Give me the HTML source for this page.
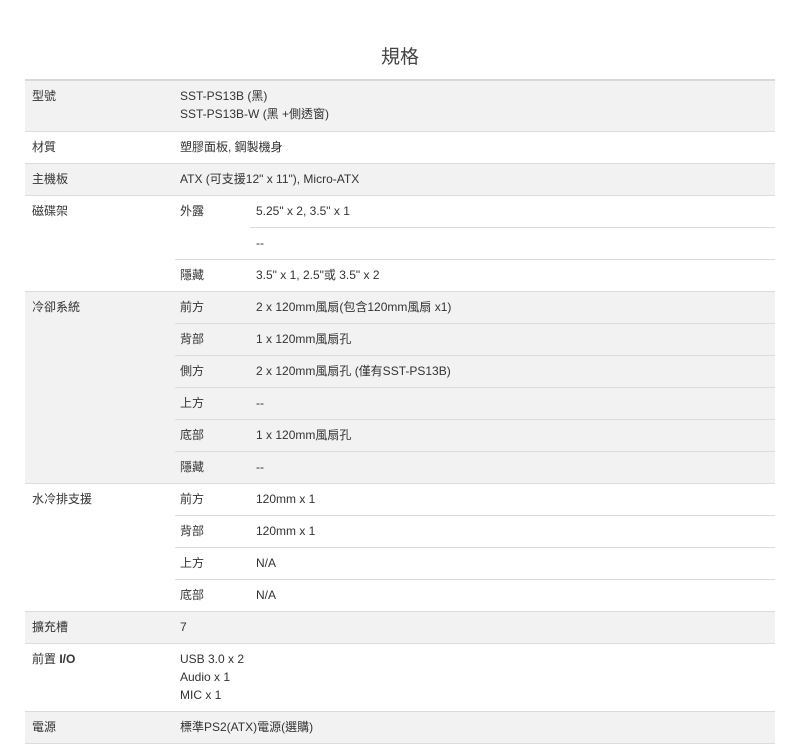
<!DOCTYPE html>
<html><head><meta charset="utf-8"><style>
*{margin:0;padding:0;box-sizing:border-box}
body{width:800px;height:748px;background:#fff;position:relative;overflow:hidden;font-family:"Liberation Sans","Noto Sans CJK TC",sans-serif;font-size:12px;color:#333}
.t{position:absolute;left:0;top:42px;width:800px;text-align:center;font-size:19px;color:#444}
.r{position:absolute;left:25px;width:750px}
.g{background:#f2f2f2}
.l{position:absolute;height:1px;background:#dcdcdc}
.x{position:absolute;line-height:18px;white-space:nowrap}
</style></head><body>
<div class="t">規格</div>
<div class="r g" style="top:80px;height:51px"></div>
<div class="r g" style="top:163px;height:32px"></div>
<div class="r g" style="top:291px;height:192px"></div>
<div class="r g" style="top:611px;height:32px"></div>
<div class="r g" style="top:711px;height:32px"></div>
<div class="l" style="left:25px;width:750px;top:79px;height:2px;background:#d8d8d8"></div>
<div class="l" style="left:25px;width:750px;top:131px"></div>
<div class="l" style="left:25px;width:750px;top:163px"></div>
<div class="l" style="left:25px;width:750px;top:195px"></div>
<div class="l" style="left:250px;width:525px;top:227px"></div>
<div class="l" style="left:175px;width:600px;top:259px"></div>
<div class="l" style="left:25px;width:750px;top:291px"></div>
<div class="l" style="left:175px;width:600px;top:323px"></div>
<div class="l" style="left:175px;width:600px;top:355px"></div>
<div class="l" style="left:175px;width:600px;top:387px"></div>
<div class="l" style="left:175px;width:600px;top:419px"></div>
<div class="l" style="left:175px;width:600px;top:451px"></div>
<div class="l" style="left:25px;width:750px;top:483px"></div>
<div class="l" style="left:175px;width:600px;top:515px"></div>
<div class="l" style="left:175px;width:600px;top:547px"></div>
<div class="l" style="left:175px;width:600px;top:579px"></div>
<div class="l" style="left:25px;width:750px;top:611px"></div>
<div class="l" style="left:25px;width:750px;top:643px"></div>
<div class="l" style="left:25px;width:750px;top:711px"></div>
<div class="l" style="left:25px;width:750px;top:743px"></div>

<div class="x" style="left:32px;top:87px">型號</div>
<div class="x" style="left:180px;top:87px">SST-PS13B (黑)<br>SST-PS13B-W (黑 +側透窗)</div>
<div class="x" style="left:32px;top:138px">材質</div>
<div class="x" style="left:180px;top:138px">塑膠面板, 鋼製機身</div>
<div class="x" style="left:32px;top:170px">主機板</div>
<div class="x" style="left:180px;top:170px">ATX (可支援12" x 11"), Micro-ATX</div>
<div class="x" style="left:32px;top:202px">磁碟架</div>
<div class="x" style="left:180px;top:202px">外露</div>
<div class="x" style="left:256px;top:202px">5.25" x 2, 3.5" x 1</div>
<div class="x" style="left:256px;top:234px">--</div>
<div class="x" style="left:180px;top:266px">隱藏</div>
<div class="x" style="left:256px;top:266px">3.5" x 1, 2.5"或 3.5" x 2</div>
<div class="x" style="left:32px;top:298px">冷卻系統</div>
<div class="x" style="left:180px;top:298px">前方</div>
<div class="x" style="left:256px;top:298px">2 x 120mm風扇(包含120mm風扇 x1)</div>
<div class="x" style="left:180px;top:330px">背部</div>
<div class="x" style="left:256px;top:330px">1 x 120mm風扇孔</div>
<div class="x" style="left:180px;top:362px">側方</div>
<div class="x" style="left:256px;top:362px">2 x 120mm風扇孔 (僅有SST-PS13B)</div>
<div class="x" style="left:180px;top:394px">上方</div>
<div class="x" style="left:256px;top:394px">--</div>
<div class="x" style="left:180px;top:426px">底部</div>
<div class="x" style="left:256px;top:426px">1 x 120mm風扇孔</div>
<div class="x" style="left:180px;top:458px">隱藏</div>
<div class="x" style="left:256px;top:458px">--</div>
<div class="x" style="left:32px;top:490px">水冷排支援</div>
<div class="x" style="left:180px;top:490px">前方</div>
<div class="x" style="left:256px;top:490px">120mm x 1</div>
<div class="x" style="left:180px;top:522px">背部</div>
<div class="x" style="left:256px;top:522px">120mm x 1</div>
<div class="x" style="left:180px;top:554px">上方</div>
<div class="x" style="left:256px;top:554px">N/A</div>
<div class="x" style="left:180px;top:586px">底部</div>
<div class="x" style="left:256px;top:586px">N/A</div>
<div class="x" style="left:32px;top:618px">擴充槽</div>
<div class="x" style="left:180px;top:618px">7</div>
<div class="x" style="left:32px;top:650px">前置 <b>I/O</b></div>
<div class="x" style="left:180px;top:650px">USB 3.0 x 2<br>Audio x 1<br>MIC x 1</div>
<div class="x" style="left:32px;top:718px">電源</div>
<div class="x" style="left:180px;top:718px">標準PS2(ATX)電源(選購)</div>
</body></html>
